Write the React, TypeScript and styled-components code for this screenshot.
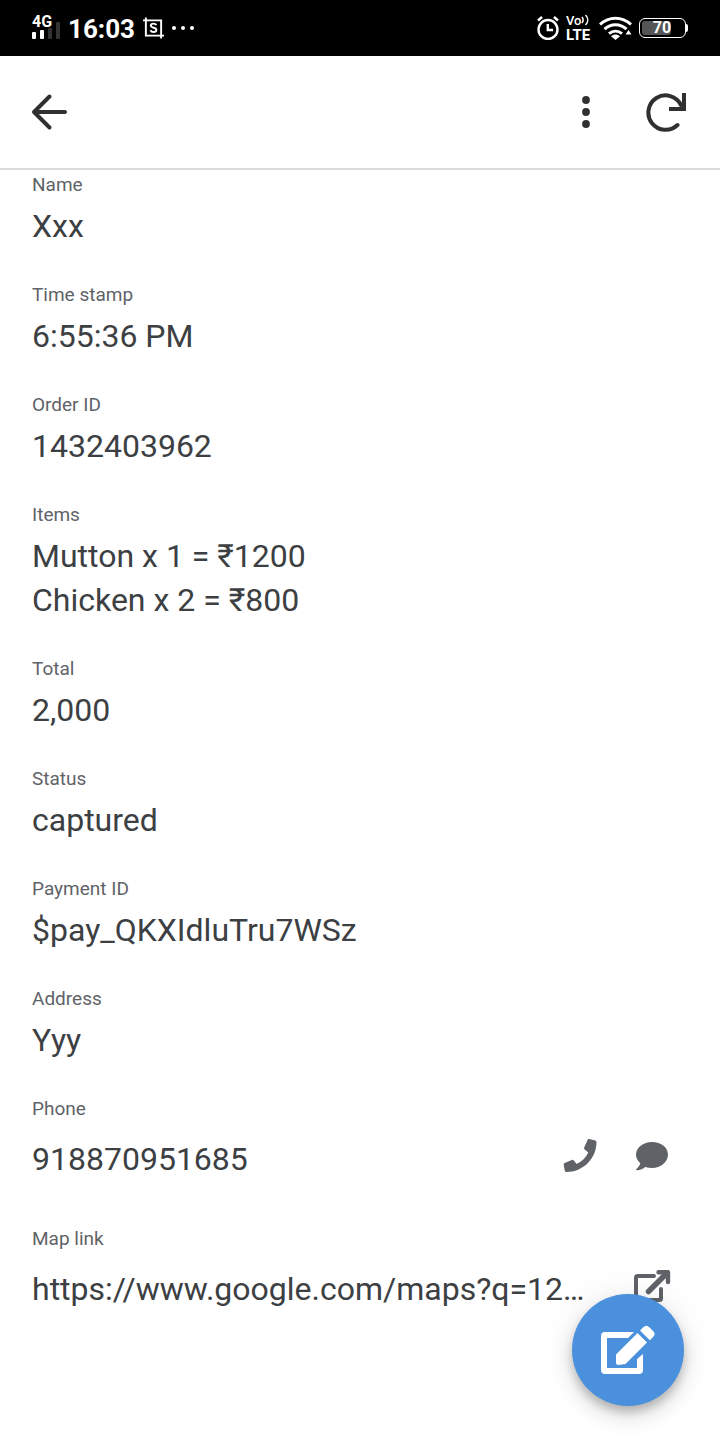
import React from "react";
import styled, { createGlobalStyle } from "styled-components";

const GlobalStyle = createGlobalStyle`
  * { box-sizing: border-box; }
  body {
    margin: 0;
    background: #ffffff;
    color: #3c4043;
    font-family: Roboto, "Noto Sans", sans-serif;
  }
`;

const Page = styled.div`
  min-height: 100vh;
  background: #ffffff;
`;

const StatusBar = styled.div`
  display: flex;
  align-items: center;
  justify-content: space-between;
  height: 56px;
  padding: 0 32px;
  background: #000000;
  color: #ffffff;
`;

const StatusGroup = styled.div<{ $gap: number }>`
  display: flex;
  align-items: center;
  gap: ${({ $gap }) => $gap}px;

  svg { display: block; flex: none; }
`;

const Signal = styled.div`
  display: flex;
  flex-direction: column;
  width: 28px;
  padding-bottom: 2px;
  font-size: 16px;
  font-weight: 700;
  line-height: 14px;

  svg { margin-top: -7px; }
`;

const Clock = styled.time`
  padding-top: 2px;
  font-size: 26px;
  font-weight: 700;
  line-height: 32px;
`;

const Volte = styled.div`
  display: flex;
  flex-direction: column;
  width: 26px;
`;

const VoiceLine = styled.span`
  display: flex;
  align-items: center;
  font-size: 13px;
  font-weight: 500;
  line-height: 13px;
`;

const LteLine = styled.span`
  font-size: 15px;
  font-weight: 700;
  line-height: 16px;
`;

const Battery = styled.div`
  display: flex;
  align-items: center;
`;

const BatteryCell = styled.div`
  width: 47px;
  height: 20px;
  padding: 2px;
  border: 1px solid #ffffff;
  border-radius: 6px;
`;

const BatteryLevel = styled.div`
  display: flex;
  justify-content: center;
  width: 29px;
  padding-left: 11px;
  border-radius: 3px;
  background: #555555;
  font-size: 16px;
  font-weight: 700;
  line-height: 14px;
`;

const BatteryTip = styled.div`
  width: 2px;
  height: 8px;
  border-radius: 0 2px 2px 0;
  background: #ffffff;
`;

const Toolbar = styled.header`
  display: flex;
  align-items: center;
  height: 114px;
  padding: 0 14px 0 9px;
  border-bottom: 2px solid #dadada;
`;

const Spacer = styled.div`
  flex: 1;
`;

const IconButton = styled.button`
  display: flex;
  align-items: center;
  justify-content: center;
  width: 80px;
  height: 80px;
  padding: 0;
  border: 0;
  background: none;
  color: #303030;
  cursor: pointer;
`;

const Details = styled.dl`
  display: flex;
  flex-direction: column;
  gap: 35px;
  margin: 0;
  padding: 3px 32px 96px;
`;

const Field = styled.div`
  display: flex;
  flex-direction: column;
  gap: 7px;
`;

const Label = styled.dt`
  color: #5f6368;
  font-size: 19px;
  line-height: 24px;
`;

const Value = styled.dd`
  margin: 0;
  font-size: 32px;
  line-height: 44px;
  white-space: pre-line;
`;

const ActionValue = styled.dd`
  display: flex;
  margin: 0;
  padding-bottom: 2px;
  font-size: 32px;
  line-height: 62px;
`;

const ActionText = styled.span`
  flex: 1;
  min-width: 0;
  overflow: hidden;
  white-space: nowrap;
`;

const ActionLink = styled.a`
  display: flex;
  align-items: center;
  justify-content: center;
  width: 72px;
  height: 56px;
  color: #5f6368;
`;

const Fab = styled.button`
  position: fixed;
  right: 36px;
  bottom: 30px;
  display: flex;
  align-items: center;
  justify-content: center;
  width: 112px;
  height: 112px;
  padding: 0;
  border: 0;
  border-radius: 50%;
  background: #4a90dc;
  color: #ffffff;
  box-shadow: 0 6px 10px rgba(0, 0, 0, 0.2), 0 10px 24px rgba(0, 0, 0, 0.12),
    0 2px 36px rgba(0, 0, 0, 0.08);
  cursor: pointer;
`;

const SignalBars = () => (
  <svg width="28" height="17" viewBox="0 0 28 17">
    <rect x="0" y="10" width="4" height="7" rx="1" fill="#fff" />
    <rect x="8" y="8" width="4" height="9" rx="1" fill="#fff" />
    <rect x="16" y="6" width="4" height="11" rx="1" fill="#333" />
    <rect x="24" y="0" width="4" height="17" rx="1" fill="#333" />
  </svg>
);

const CaptureIcon = () => (
  <svg width="21" height="22" viewBox="0 0 22 22" fill="none" stroke="#fff" strokeWidth="2">
    <path d="M0 3h19v19M3 0v19h19" />
    <path d="M14 8c-.6-1.200-1.600-1.600-3-1.600-1.700 0-2.800.8-2.800 2.100 0 3.100 5.800 1.300 5.800 4.500 0 1.500-1.300 2.200-3 2.200-1.500 0-2.600-.6-3.200-1.800" />
  </svg>
);

const DotsIcon = () => (
  <svg width="22" height="4" viewBox="0 0 22 4" fill="#fff">
    <circle cx="2" cy="2" r="2" />
    <circle cx="11" cy="2" r="2" />
    <circle cx="20" cy="2" r="2" />
  </svg>
);

const AlarmIcon = () => (
  <svg width="22" height="24" viewBox="0 0 22 24" fill="none" stroke="#fff" strokeWidth="2.400">
    <circle cx="11" cy="13.500" r="9.500" />
    <path d="M10.800 8v6h5.200M1 4.500 5 1M21 4.500 17 1" />
  </svg>
);

const VoiceWaves = () => (
  <svg width="9" height="12" viewBox="0 0 9 12" fill="none" stroke="#fff" strokeWidth="1.500">
    <path d="M1 3c1.500 2 1.500 4 0 6M4.500 1c3 3 3 7 0 10" />
  </svg>
);

const WifiIcon = () => (
  <svg width="33" height="24" viewBox="0 0 33 24" fill="none" stroke="#fff" strokeWidth="3">
    <path d="M1 8.500C10 0 23 0 32 8.500M5.500 13.200c6.500-6 15.500-6 22 0M10 17.700c4-3.400 9-3.400 13 0" />
    <path d="M12 20.200c2.800-2.300 6.200-2.300 9 0L16.500 24z" fill="#fff" stroke="none" />
    <path d="M26.500 18.500 29.500 14l3 4.500z" fill="#fff" stroke="none" />
  </svg>
);

const BackIcon = () => (
  <svg width="40" height="40" viewBox="0 0 40 40" fill="none" stroke="currentColor" strokeWidth="4" strokeLinecap="round" strokeLinejoin="round">
    <path d="M36 20H5M20.500 4.500 5 20l15.500 15.500" />
  </svg>
);

const MoreIcon = () => (
  <svg width="8" height="32" viewBox="0 0 8 32" fill="currentColor">
    <circle cx="4" cy="4" r="3.900" />
    <circle cx="4" cy="16" r="3.900" />
    <circle cx="4" cy="28" r="3.900" />
  </svg>
);

const RefreshIcon = () => (
  <svg width="40" height="40" viewBox="0 0 40 40" fill="none" stroke="currentColor" strokeWidth="4">
    <path d="M31.500 33A17.200 17.200 0 1 1 35 13" strokeLinecap="round" />
    <path d="M38 1v16H23" />
  </svg>
);

const PhoneIcon = () => (
  <svg width="34" height="34" viewBox="0 0 34 34" fill="currentColor">
    <path d="M24.500 1.200c.2-.8.900-1.300 1.700-1.100l6 1.300c.8.200 1.300.8 1.300 1.600C33.500 19.500 20 33 3.500 33c-.8 0-1.500-.5-1.700-1.300L.7 26c-.2-.8.200-1.600.9-1.900l7.200-3.100c.7-.3 1.500-.1 2 .5l2.900 3.500c5.300-2.500 9.300-6.600 11.600-11.500l-3.600-2.900c-.6-.5-.8-1.300-.5-2z" />
  </svg>
);

const ChatIcon = () => (
  <svg width="32" height="30" viewBox="0 0 32 30" fill="currentColor">
    <path d="M16 1C7.200 1 0 6.600 0 13.600c0 3.400 1.600 6.400 4.300 8.700-.5 2.200-2 4-4.100 5.900-.4.400-.1 1 .4 1 3.700-.1 6.600-1.500 8.600-3.200 2.100.7 4.400 1.100 6.800 1.100 8.800 0 16-6 16-13.500S24.800 1 16 1z" />
  </svg>
);

const OpenIcon = () => (
  <svg width="38" height="34" viewBox="0 0 38 34" fill="none" stroke="currentColor">
    <path d="M21 7H4.500Q3 7 3 8.500v21Q3 31 4.500 31h22Q28 31 28 29.500V20" strokeWidth="4" strokeLinecap="round" />
    <path d="M15.500 22.500 33 5" strokeWidth="5.500" strokeLinecap="round" />
    <path d="M25.500 3.200H35V13" strokeWidth="4.400" strokeLinecap="round" strokeLinejoin="round" />
    <path d="M27 3h8v8z" fill="currentColor" stroke="none" />
  </svg>
);

const EditIcon = () => (
  <svg width="54" height="50" viewBox="0 0 54 50" fill="currentColor">
    <path d="M33 7H4Q0 7 0 11v34q0 4 4 4h34q4 0 4-4V29l-6 5v9H6V13h21z" />
    <path d="M15 29.500 36.500 8l9.500 9.500L24.500 39l-7 1Q15 40 15 37.500z" />
    <path d="m39 5.500 3.300-3.300q3-3 6 0l3.800 3.800q3 3 0 6l-3.300 3.300z" />
  </svg>
);

const FIELDS = [
  { label: "Name", value: "Xxx" },
  { label: "Time stamp", value: "6:55:36 PM" },
  { label: "Order ID", value: "1432403962" },
  { label: "Items", value: "Mutton x 1 = ₹1200\nChicken x 2 = ₹800" },
  { label: "Total", value: "2,000" },
  { label: "Status", value: "captured" },
  { label: "Payment ID", value: "$pay_QKXIdluTru7WSz" },
  { label: "Address", value: "Yyy" },
];

export default function App() {
  return (
    <Page>
      <GlobalStyle />
      <StatusBar>
        <StatusGroup $gap={8}>
          <Signal>
            4G
            <SignalBars />
          </Signal>
          <Clock>16:03</Clock>
          <CaptureIcon />
          <DotsIcon />
        </StatusGroup>
        <StatusGroup $gap={7}>
          <AlarmIcon />
          <Volte>
            <VoiceLine>
              Vo
              <VoiceWaves />
            </VoiceLine>
            <LteLine>LTE</LteLine>
          </Volte>
          <WifiIcon />
          <Battery>
            <BatteryCell>
              <BatteryLevel>70</BatteryLevel>
            </BatteryCell>
            <BatteryTip />
          </Battery>
        </StatusGroup>
      </StatusBar>
      <Toolbar>
        <IconButton aria-label="Back">
          <BackIcon />
        </IconButton>
        <Spacer />
        <IconButton aria-label="More options">
          <MoreIcon />
        </IconButton>
        <IconButton aria-label="Refresh">
          <RefreshIcon />
        </IconButton>
      </Toolbar>
      <Details>
        {FIELDS.map(({ label, value }) => (
          <Field key={label}>
            <Label>{label}</Label>
            <Value>{value}</Value>
          </Field>
        ))}
        <Field>
          <Label>Phone</Label>
          <ActionValue>
            <ActionText>918870951685</ActionText>
            <ActionLink href="tel:918870951685" aria-label="Call">
              <PhoneIcon />
            </ActionLink>
            <ActionLink href="sms:918870951685" aria-label="Message">
              <ChatIcon />
            </ActionLink>
          </ActionValue>
        </Field>
        <Field>
          <Label>Map link</Label>
          <ActionValue>
            <ActionText>https://www.google.com/maps?q=12…</ActionText>
            <ActionLink href="https://www.google.com/maps?q=12" aria-label="Open map">
              <OpenIcon />
            </ActionLink>
          </ActionValue>
        </Field>
      </Details>
      <Fab aria-label="Edit">
        <EditIcon />
      </Fab>
    </Page>
  );
}
